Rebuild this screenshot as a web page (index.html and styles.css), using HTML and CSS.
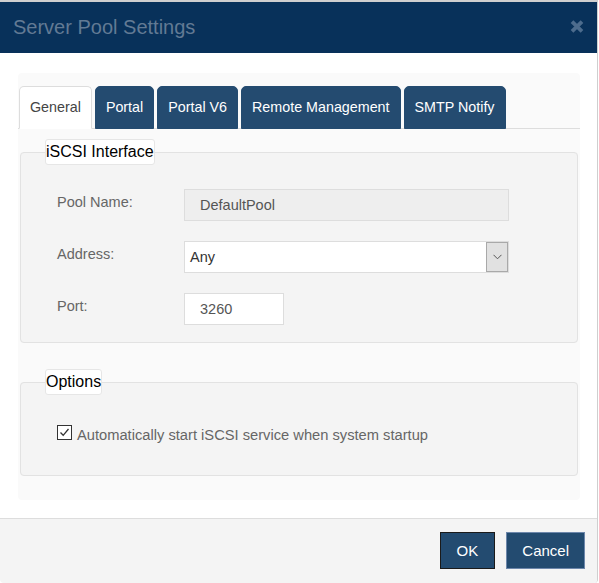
FILE: index.html
```html
<!DOCTYPE html>
<html lang="en">
<head>
    <meta charset="UTF-8">
    <meta name="viewport" content="width=device-width, initial-scale=1.0">
    <title>Server Pool Settings</title>
    <link rel="stylesheet" href="styles.css">
</head>
<body>
    <div class="dialog">
        <div class="dialog-header">
            <h4 class="dialog-title">Server Pool Settings</h4>
            <span class="close">
                <svg width="14" height="13" viewBox="0 0 14 13"><path d="M2 1.6 L12 11.4 M12 1.6 L2 11.4" stroke="#4d6c8d" stroke-width="3.8" fill="none"/></svg>
            </span>
        </div>
        <div class="dialog-body">
            <div class="panel">
                <ul class="tabs">
                    <li class="active">General</li>
                    <li>Portal</li>
                    <li>Portal V6</li>
                    <li>Remote Management</li>
                    <li>SMTP Notify</li>
                </ul>
                <div class="tab-content">
                    <fieldset class="group">
                        <legend>iSCSI Interface</legend>
                        <div class="fields">
                            <div class="row">
                                <label for="poolName">Pool Name:</label>
                                <input type="text" id="poolName" class="input readonly" value="DefaultPool" readonly>
                            </div>
                            <div class="row">
                                <label>Address:</label>
                                <div class="select">
                                    <span class="select-value">Any</span>
                                    <span class="select-arrow">
                                        <svg width="9" height="6" viewBox="0 0 9 6"><path d="M0.5 0.8 L4.5 4.8 L8.5 0.8" stroke="#555" stroke-width="1" fill="none"/></svg>
                                    </span>
                                </div>
                            </div>
                            <div class="row">
                                <label for="port">Port:</label>
                                <input type="text" id="port" class="input port" value="3260">
                            </div>
                        </div>
                    </fieldset>
                    <fieldset class="group options">
                        <legend>Options</legend>
                        <div class="check-row">
                            <span class="checkbox">
                                <svg width="13" height="13" viewBox="0 0 13 13"><path d="M2.5 6.5 L5.2 9.3 L10.5 3" stroke="#333" stroke-width="1.3" fill="none"/></svg>
                            </span>
                            <span class="check-label">Automatically start iSCSI service when system startup</span>
                        </div>
                    </fieldset>
                </div>
            </div>
        </div>
        <div class="dialog-footer">
            <button type="button" class="btn btn-focus">OK</button>
            <button type="button" class="btn">Cancel</button>
        </div>
    </div>
</body>
</html>
```

FILE: styles.css
```css
body {
    margin: 0;
    font-family: "Liberation Sans", Arial, sans-serif;
    background-color: #fff;
}
.dialog {
    width: 597px;
    height: 581px;
    border-top: 2px solid #cfcfcf;
    border-right: 1px solid #cfcfcf;
    border-radius: 0 0 4px 4px;
    overflow: hidden;
    display: flex;
    flex-direction: column;
}
.dialog-header {
    height: 51px;
    background: #08315a;
    display: flex;
    align-items: center;
    justify-content: space-between;
    padding: 0 13px;
}
.dialog-title {
    margin: 0 0 1px;
    font-size: 20px;
    font-weight: normal;
    line-height: 23px;
    color: #627a94;
}
.close {
    display: flex;
    margin-bottom: 2px;
}
.dialog-body {
    padding: 20px 17px 18px 18px;
}
.panel {
    background: #fafafa;
    border-radius: 4px;
    padding: 13px 0 24px;
}
.tabs {
    list-style: none;
    margin: 0;
    padding: 0 0 0 1px;
    display: flex;
    gap: 3px;
    border-bottom: 1px solid #dddddd;
}
.tabs li {
    margin-bottom: -1px;
    padding: 0 10px;
    line-height: 41px;
    font-size: 14.3px;
    color: #fff;
    background: #244b70;
    border: 1px solid #244b70;
    border-radius: 5px 5px 0 0;
}
.tabs li.active {
    color: #444;
    background: #fff;
    border-color: #dddddd;
    border-bottom-color: #fff;
}
.tab-content {
    padding-top: 10px;
}
.group {
    margin: 0 2px;
    padding: 0;
    min-width: 0;
    border: 1px solid #e2e2e2;
    border-radius: 4px;
    background: #f4f4f4;
}
.group legend {
    margin-left: 24px;
    padding: 0;
    font-size: 16px;
    line-height: 24px;
    color: #000;
    background: #fff;
    border: 1px solid #e6e6e6;
    border-radius: 3px;
}
.options {
    margin-top: 26px;
}
.fields {
    padding: 24px 0 17px 36px;
}
.row {
    display: flex;
    align-items: flex-start;
    margin-bottom: 20px;
}
.row:last-child {
    margin-bottom: 0;
}
.row label {
    width: 127px;
    padding-top: 3px;
    line-height: 20px;
    font-size: 14.5px;
    color: #666;
}
.input {
    box-sizing: border-box;
    height: 32px;
    margin: 0;
    padding: 0 15px;
    border: 1px solid #dddddd;
    background: #fff;
    font-family: inherit;
    font-size: 14.5px;
    color: #555;
    outline: none;
}
.readonly {
    width: 325px;
    background: #eeeeee;
}
.port {
    width: 100px;
}
.select {
    box-sizing: border-box;
    width: 325px;
    height: 32px;
    display: flex;
    align-items: center;
    padding-left: 5px;
    border: 1px solid #dddddd;
    background: #fff;
    font-size: 14.5px;
    color: #333;
}
.select-arrow {
    box-sizing: border-box;
    margin-left: auto;
    width: 22px;
    height: 30px;
    display: flex;
    align-items: center;
    justify-content: center;
    background: #e1e1e1;
    border: 1px solid #a9a9a9;
}
.check-row {
    display: flex;
    align-items: flex-start;
    padding: 30px 0 30px 36px;
    line-height: 20px;
}
.checkbox {
    box-sizing: border-box;
    width: 15px;
    height: 15px;
    margin-right: 5px;
    display: flex;
    align-items: center;
    justify-content: center;
    border: 1px solid #333;
    background: #fff;
}
.check-label {
    font-size: 14.7px;
    color: #666;
}
.dialog-footer {
    flex: 1;
    display: flex;
    justify-content: flex-end;
    align-items: flex-start;
    gap: 11px;
    padding: 13px 12px 0 0;
    border-top: 1px solid #dddddd;
    background: #f4f4f4;
}
.btn {
    height: 37px;
    margin: 0;
    padding: 0 15px;
    font-family: inherit;
    font-size: 15px;
    color: #fff;
    background: #234b70;
    border: 1px solid #6d87ab;
    border-radius: 0;
}
.btn-focus {
    padding: 0 16px;
    border-color: #1a1a1a;
}
```
